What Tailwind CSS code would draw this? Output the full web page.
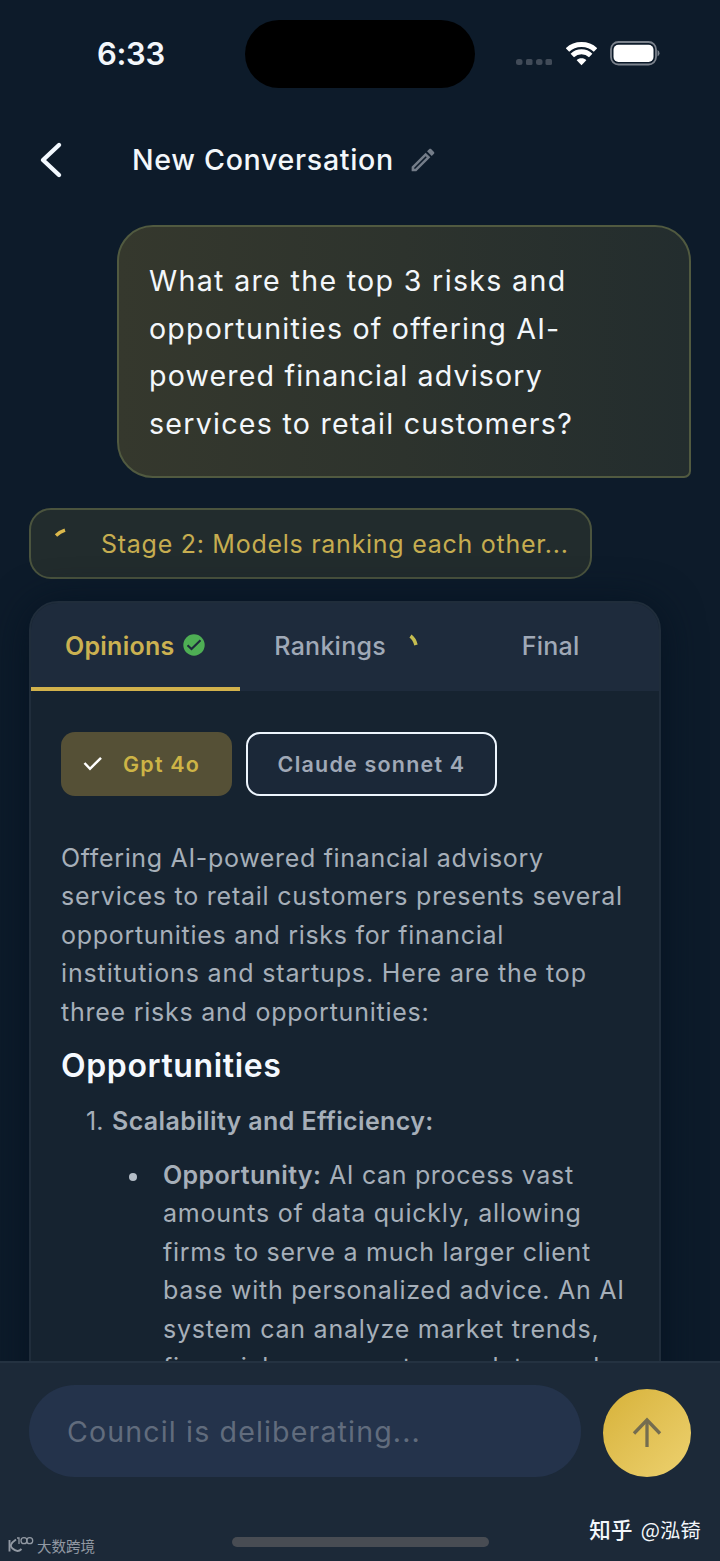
<!DOCTYPE html>
<html lang="en">
<head>
<meta charset="utf-8">
<title>New Conversation</title>
<script src="https://cdn.jsdelivr.net/npm/@tailwindcss/browser@4"></script>
</head>
<body class="bg-[#0d1b2a]">
<div class="relative flex h-[1561px] w-[720px] flex-col overflow-hidden bg-[#0d1b2a] font-['Inter',sans-serif] whitespace-nowrap text-[#f3f7fb]">

  <!-- Status bar -->
  <div class="flex h-[107px] shrink-0 items-start">
    <div class="w-[245px] pt-[36px] pl-[97px] text-[31px] leading-[36px] font-semibold tracking-[-0.300px]">6:33</div>
    <div class="mt-[20px] h-[68px] w-[230px] rounded-full bg-black"></div>
    <div class="mt-[38px] ml-[41px] flex items-start">
      <svg class="mt-[20px]" width="37" height="8" viewBox="0 0 37 8" fill="#414b58"><rect x="0" y="1" width="6.5" height="6" rx="2.5"/><rect x="10" y="1" width="6.5" height="6" rx="1.5"/><rect x="20" y="1" width="6.5" height="6" rx="2.5"/><rect x="29.500" y="1" width="6.500" height="6" rx="1.500"/></svg>
      <svg class="mt-[3px] ml-[13px]" width="31" height="26" viewBox="0 0 31 26" fill="none" stroke="#fff" stroke-width="4.900"><path d="M1.500 9 C9 1.700 22 1.700 29.500 9"/><path d="M6.300 14.500 C11.500 9.500 19.500 9.500 24.700 14.500"/><path d="M10.700 19.200 C13 16.700 18 16.700 20.300 19.200 L15.500 24.300Z" fill="#fff" stroke="none"/></svg>
      <svg class="mt-[3px] ml-[13px]" width="52" height="25" viewBox="0 0 52 25"><rect x="1" y="1" width="45" height="22.500" rx="7.500" fill="none" stroke="#7b828c" stroke-width="1.800"/><rect x="3.500" y="3.700" width="40" height="17.300" rx="5" fill="#fff"/><path d="M47.500 9 Q49.500 9.800 49.500 12.200 Q49.500 14.700 47.500 15.500Z" fill="#7b828c"/></svg>
    </div>
  </div>

  <!-- Title bar -->
  <div class="flex h-[106px] shrink-0 items-center pl-[38px]">
    <svg width="26" height="38" viewBox="0 0 26 38" fill="none" stroke="#f3f9ff" stroke-width="4.400" stroke-linecap="round" stroke-linejoin="round"><path d="M21 4 L5 19 L21 34"/></svg>
    <div class="ml-[68px] w-[261px] text-[28.600px] font-medium tracking-[0.680px]">New Conversation</div>
    <svg class="ml-[18px]" width="24" height="24" viewBox="2.500 2.500 19 19" fill="#747d89"><path d="M14.100 9.000 15.000 9.900 5.900 19H5v-.9L14.100 9M17.700 3c-.3 0-.5.100-.7.300l-1.800 1.800 3.700 3.700 1.800-1.800c.4-.4.4-1 0-1.400L18.400 3.300c-.2-.2-.4-.3-.7-.3zM14.100 6.200 3 17.300V21h3.700L17.800 9.900 14.100 6.200z"/></svg>
  </div>

  <!-- Messages -->
  <div class="flex min-h-0 flex-1 flex-col items-start overflow-hidden pt-[12px] pl-[29px]">
    <div class="ml-[88px] h-[253px] w-[574px] shrink-0 rounded-[36px] rounded-br-[7px] border-2 border-[#515a40] bg-linear-to-r from-[#35382d] via-[#2d332d] to-[#232d2e] pt-[30px] pl-[30px] text-[28.600px] leading-[47.700px] tracking-[1.320px]">What are the top 3 risks and<br><span class="tracking-[1.200px]">opportunities of offering AI-</span><br><span class="tracking-[1.150px]">powered financial advisory</span><br><span class="tracking-[1.260px]">services to retail customers?</span></div>

    <div class="mt-[30px] flex h-[71px] w-[563px] shrink-0 items-center rounded-[22px] border-2 border-[#4b543e] bg-[#222c2d] pl-[22px]">
      <svg width="28" height="36" viewBox="0 0 28 36" fill="none" stroke="#dcb94c" stroke-width="3.400"><path d="M3 9.500 Q7 5.800 12 4.200"/></svg>
      <div class="ml-[20px] pt-[2px] text-[25px] tracking-[0.730px] text-[#c6ad50]">Stage 2: Models ranking each other...</div>
    </div>

    <div class="mt-[22px] flex h-[900px] w-[632px] shrink-0 flex-col overflow-hidden rounded-t-[29px] border-2 border-[#202d3b] bg-[#162330] shadow-[0_4px_40px_#051322]">
      <!-- Tabs -->
      <div class="grid h-[88px] shrink-0 grid-cols-3 bg-[#1e2b3c] text-[25px] font-medium tracking-[0.250px] text-[#a0a9b7]">
        <div class="flex items-center border-b-4 border-[#d2b24c] pt-[3px] pl-[34px] font-semibold text-[#cbb151]">
          <span>Opinions</span>
          <svg class="mb-[3px] ml-[9px]" width="22" height="22" viewBox="0 0 22 22"><circle cx="11" cy="11" r="10.700" fill="#4eae54"/><path d="M4.500 11.300 8.500 15 17.500 6.300" fill="none" stroke="#1e2b3c" stroke-width="2.200"/></svg>
        </div>
        <div class="flex items-center pl-[34px]">
          <span>Rankings</span>
          <svg class="mb-[4px] ml-[22px]" width="14" height="22" viewBox="0 0 14 22" fill="none" stroke="#c5bd50" stroke-width="3.500"><path d="M2.500 2 Q6.500 5 8 11"/></svg>
        </div>
        <div class="flex items-center pl-[72px]">Final</div>
      </div>

      <!-- Model chips -->
      <div class="mt-[41px] ml-[30px] flex h-[64px] shrink-0 text-[21.500px] font-semibold tracking-[1.200px]">
        <div class="flex w-[171px] items-center rounded-[14px] bg-[#555036] pl-[22px] text-[#cdb446]">
          <svg width="20" height="16" viewBox="0 0 20 16" fill="none" stroke="#fff" stroke-width="2.500"><path d="M1.500 7 7 12.800 18 1.800"/></svg>
          <span class="ml-[20px]">Gpt 4o</span>
        </div>
        <div class="ml-[14px] flex w-[251px] items-center justify-center rounded-[14px] border-2 border-[#edf5fd] bg-[#1b2838] text-[#a0a9b7]">Claude sonnet 4</div>
      </div>

      <!-- Response -->
      <div class="mt-[43px] ml-[30px] text-[25px] leading-[38.450px] tracking-[0.760px] text-[#a6afb9]">
        <p><span class="tracking-[0.670px]">Offering AI-powered financial advisory</span><br>services to retail customers presents several<br><span class="tracking-[0.710px]">opportunities and risks for financial</span><br><span class="tracking-[0.860px]">institutions and startups. Here are the top</span><br>three risks and opportunities:</p>
        <h2 class="mt-[14px] text-[32px] leading-[42px] font-semibold tracking-[0.620px] text-[#f5f9fe]">Opportunities</h2>
        <div class="mt-[15px] flex pl-[25px]"><span class="w-[26px] tracking-normal">1.</span><span class="font-semibold tracking-[0.370px]">Scalability and Efficiency:</span></div>
        <div class="mt-[15px] flex pl-[68px]">
          <div class="mt-[17px] h-[8px] w-[8px] shrink-0 rounded-full bg-[#b4bdc7]"></div>
          <p class="ml-[26px]"><span class="font-semibold tracking-[0.350px]">Opportunity:</span><span class="tracking-[0.660px]"> AI can process vast</span><br>amounts of data quickly, allowing<br><span class="tracking-[0.710px]">firms to serve a much larger client</span><br><span class="tracking-[0.730px]">base with personalized advice. An AI</span><br>system can analyze market trends,<br>financial news, customer data, and</p>
        </div>
      </div>
    </div>
  </div>

  <!-- Composer -->
  <div class="z-10 flex h-[200px] shrink-0 flex-col border-t-2 border-[#243241] bg-[#1c2938]">
    <div class="mt-[22px] ml-[29px] flex items-start">
      <div class="flex h-[92px] w-[552px] items-center rounded-full bg-[#24334b] pt-[2px] pl-[38px] text-[28.600px] tracking-[1.130px] text-[#616c7d]">Council is deliberating...</div>
      <div class="mt-[4px] ml-[22px] flex h-[88px] w-[88px] items-center justify-center rounded-full bg-linear-to-br from-[#d7b238] to-[#edd16e]">
        <svg width="30" height="32" viewBox="0 0 30 32" fill="none" stroke="#746d50" stroke-width="3.300"><path d="M15 30 V4"/><path d="M2 16.500 15 3 28 16.500"/></svg>
      </div>
    </div>
    <div class="flex flex-1 items-end justify-between pr-[19px] pb-[5px] pl-[8px] font-['Noto_Sans_CJK_SC',sans-serif]">
      <div class="flex items-center text-[14.500px] leading-[20px] text-[#9299a3]">
        <svg class="mb-[2px]" width="26" height="18" viewBox="0 0 26 18" fill="none" stroke="#9299a3"><path d="M1.500 4 V15.500" stroke-width="1.900"/><path d="M8 3.500 Q0 9 4.500 12.500 Q9.500 17 13.500 13" stroke-width="1.900"/><path d="M9 2 H11 V8" stroke-width="1.300"/><circle cx="16" cy="4.700" r="3" stroke-width="1.300"/><circle cx="21.700" cy="4.700" r="3" stroke-width="1.300"/></svg>
        <span class="ml-[3px]">大数跨境</span>
      </div>
      <div class="mb-[13px] text-[20.300px] leading-[28px] tracking-[0.200px] text-[#f3f7fb]"><span class="text-[21.500px] font-medium">知乎</span><span class="ml-[8px]">@泓锜</span></div>
    </div>
  </div>
  <!-- Home indicator -->
  <div class="absolute bottom-[14px] left-[232px] z-20 h-[10px] w-[257px] rounded-full bg-[#484c53]"></div>
</div>
</body>
</html>
